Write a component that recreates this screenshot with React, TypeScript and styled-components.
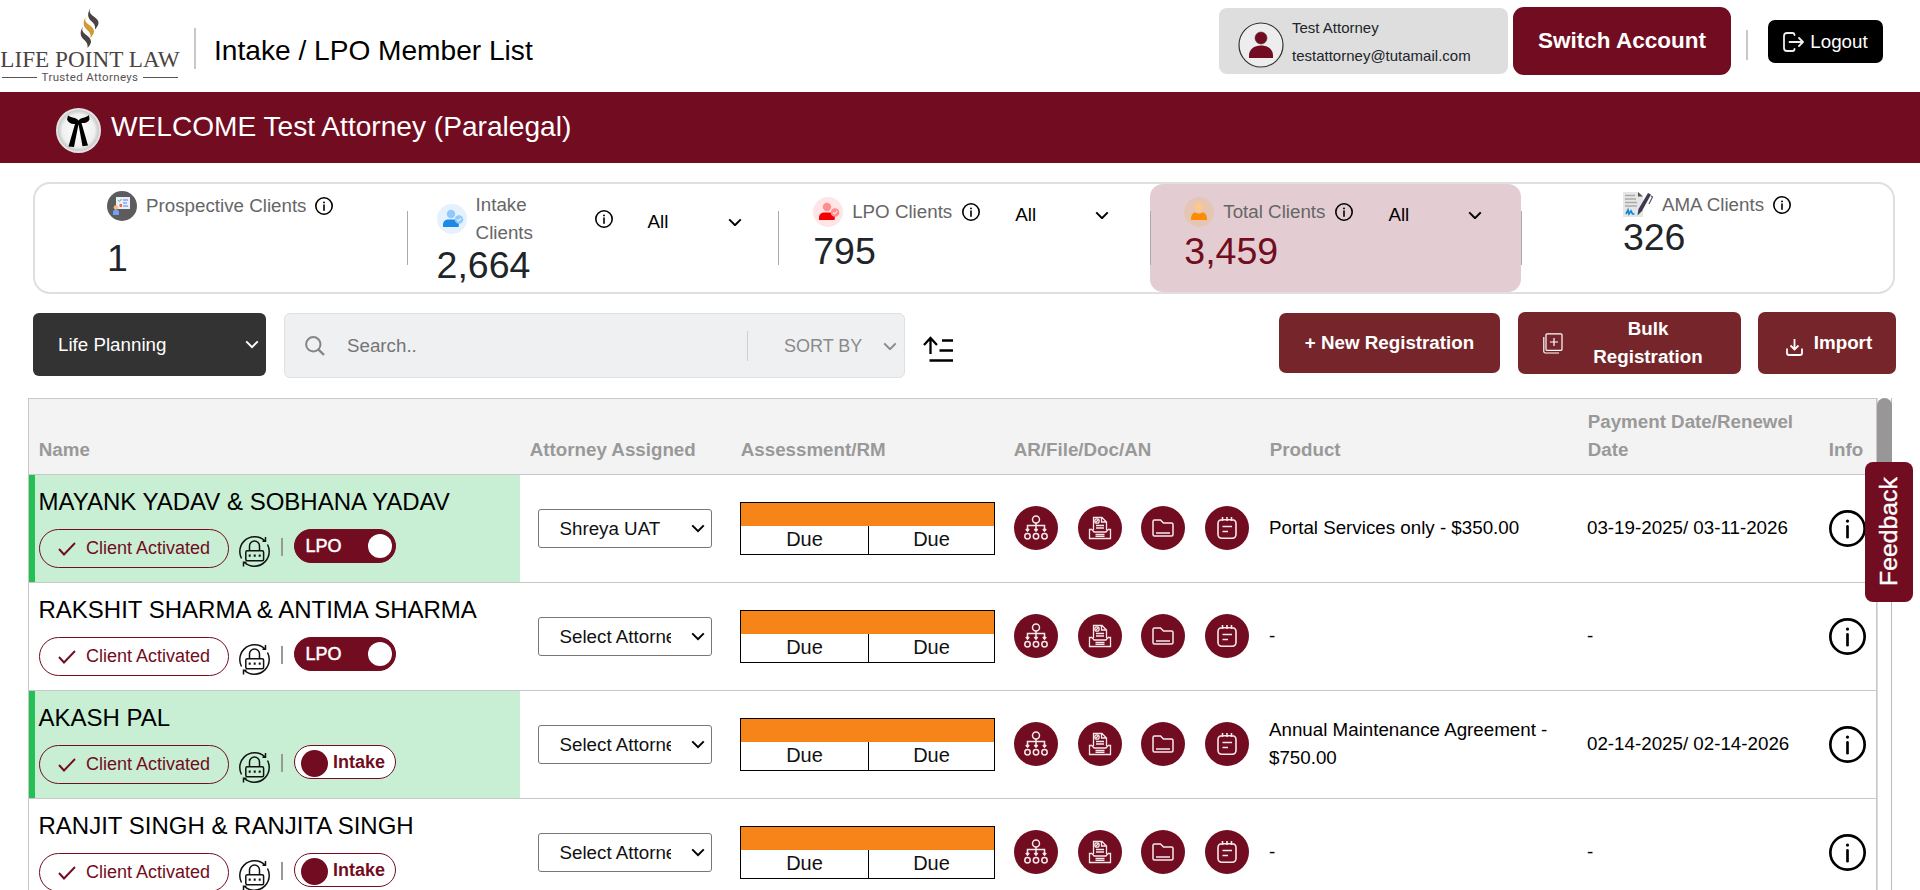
import React from "react";
import styled, { createGlobalStyle } from "styled-components";

const MAROON = "#720c20";

const Global = createGlobalStyle`
  *, *::before, *::after { box-sizing: border-box; }
  html, body { margin: 0; padding: 0; height: 890px; overflow: hidden; background: #fff; }
  body { font-family: "Liberation Sans", Arial, sans-serif; font-size: 18.75px; line-height: 28px; color: #000; }
  button { font-family: inherit; cursor: pointer; padding: 0; border: 0; }
  svg { display: block; flex: none; }
`;

const Page = styled.div`
  width: 1920px; height: 890px; overflow: hidden; position: relative;
  display: flex; flex-direction: column;
`;

/* ---------- header ---------- */
const Header = styled.header`
  height: 92px; flex: none; display: flex; align-items: flex-start;
`;
const Logo = styled.div`
  width: 180px; height: 92px; padding: 8px 0 0; margin-right: 14px;
  display: flex; flex-direction: column; align-items: center;
`;
const LogoName = styled.div`
  font: 23.2px/24px "Liberation Serif", serif; color: #4b4343; white-space: nowrap; margin-top: -1px;
`;
const LogoTag = styled.div`
  display: flex; align-items: center; gap: 5px; margin-top: -1px;
  font: 11.5px/14px Roboto, sans-serif; letter-spacing: 0.35px; color: #5a5353;
  &::before, &::after { content: ""; width: 35px; height: 1px; background: #5a5353; margin-top: 1px; }
`;
const Rule = styled.span<{ $top: number; $h: number }>`
  width: 2px; height: ${(p) => p.$h}px; margin-top: ${(p) => p.$top}px; background: #c8c8c8; flex: none;
`;
const Title = styled.h1`
  margin: 30px 0 0 18px; font-size: 28.125px; line-height: 42px; font-weight: 400; flex: 1; white-space: nowrap;
`;
const Account = styled.div`
  width: 289px; height: 66px; margin: 8px 5px 0 0; padding: 6px 0 0 19px; border-radius: 8px;
  background: #dedede; display: flex; font-size: 15px; color: #212529;
  svg { margin: 8px 8px 0 0; }
`;
const Switch = styled.button`
  width: 218px; height: 68px; margin: 7px 15px 0 0; padding-bottom: 1px; border-radius: 11px; background: ${MAROON};
  color: #fff; font-size: 22.5px; font-weight: 700;
`;
const Logout = styled.button`
  width: 115px; height: 43px; margin: 20px 37px 0 20px; border-radius: 7px; background: #000; color: #fff;
  font-size: 18.75px; display: flex; align-items: center; justify-content: center; gap: 6px;
`;

/* ---------- welcome band ---------- */
const Band = styled.div`
  height: 71px; flex: none; background: ${MAROON}; color: #fff; font-size: 28.125px; line-height: 42px;
  display: flex; align-items: flex-start; padding: 14px 0 0 56px; gap: 10px;
  svg { margin-top: 2px; }
`;

/* ---------- statistics ---------- */
const Stats = styled.section`
  margin: 19px 25px 0 33px; height: 112px; flex: none; border: 2px solid #dfdfdf; border-radius: 17px;
  display: grid; grid-template-columns: repeat(5, 1fr);
`;
const Stat = styled.div<{ $active?: boolean; $first?: boolean; $pad: string }>`
  padding: ${(p) => p.$pad}; position: relative; border-radius: 13px;
  background: ${(p) => (p.$active ? "#e4cdd2" : "transparent")};
  color: ${(p) => (p.$active ? MAROON : "#212529")};
  &::before {
    content: ""; position: absolute; left: 0; top: 27px; width: 1px; height: 54px; background: #aaa;
    display: ${(p) => (p.$first ? "none" : "block")};
  }
`;
const StatTop = styled.div`
  display: flex; align-items: center;
`;
const StatLabel = styled.span<{ $w?: number; $mr?: number }>`
  width: ${(p) => (p.$w ? p.$w + "px" : "auto")}; color: #666; margin: 0 ${(p) => p.$mr ?? 9}px 0 9px;
`;
const Filter = styled.div`
  display: flex; align-items: center; justify-content: space-between; width: 94px; color: #000;
  margin: 3px 0 -3px 35px;
`;
const StatValue = styled.div<{ $mt: number }>`
  font-size: 37.5px; line-height: 40px; margin-top: ${(p) => p.$mt}px;
`;

/* ---------- toolbar ---------- */
const Toolbar = styled.div`
  height: 66px; flex: none; margin: 18px 24px 0 33px; display: flex; align-items: flex-start;
`;
const Plan = styled.div`
  width: 233px; height: 63px; margin: 1px 18px 0 0; padding: 0 7px 0 25px; border-radius: 6px; background: #333;
  color: #fff; display: flex; align-items: center; justify-content: space-between;
`;
const Search = styled.div`
  width: 621px; height: 65px; margin-top: 1px; padding: 1px 0 0 20px; border: 1px solid #dee0e3; border-radius: 6px;
  background: #eff0f2; color: #757575; display: flex; align-items: center;
`;
const SearchHint = styled.span`
  flex: 1; padding-left: 22px;
`;
const SortBy = styled.div`
  width: 157px; padding: 0 7px 0 36px; border-left: 1px solid #cfd0d3; height: 30px; color: #8a8a8a; font-size: 18px;
  display: flex; align-items: center; justify-content: space-between;
`;
const SortIcon = styled.div`
  margin: 24px auto 0 18px;
`;
const Action = styled.button<{ $w: number; $h: number; $top?: number; $ml?: number }>`
  width: ${(p) => p.$w}px; height: ${(p) => p.$h}px; margin: ${(p) => p.$top || 0}px 0 0 ${(p) => p.$ml || 0}px;
  border-radius: 7px; background: #76262b; color: #fff; font-size: 18.75px; line-height: 28px; font-weight: 700;
  display: flex; align-items: center; justify-content: center;
`;
const BulkText = styled.span`
  width: 112px; margin: 0 12px 0 29px;
`;
const ImportText = styled.span`
  margin: 0 0 0 11px;
`;
const ImportGlyph = styled.span`
  margin: 8px 0 0 4px;
`;

/* ---------- table ---------- */
const TableArea = styled.div`
  margin: 20px 0 0 28px; display: flex; flex: 1; min-height: 0;
`;
const Table = styled.div`
  width: 1849px; border-left: 1px solid #c8c8c8; border-right: 1px solid #c8c8c8; overflow: hidden;
`;
const Columns = styled.div`
  display: grid; grid-template-columns: 491px 211px 273px 256px 318px 241px 57px;
`;
const HeadRow = styled(Columns)`
  height: 77px; border-top: 1px solid #c8c8c8; border-bottom: 1px solid #c8c8c8; background: #f3f3f3;
  align-items: end; padding-bottom: 10px; color: #999; font-weight: 700;
  > * { padding-left: 9.75px; }
`;
const Row = styled(Columns)`
  height: 108px; border-bottom: 1px solid #c8c8c8; align-items: center;
`;
const NameCell = styled.div<{ $active?: boolean }>`
  height: 107px; padding: 10px 0 0 ${(p) => (p.$active ? 4 : 10)}px;
  background: ${(p) => (p.$active ? "#c8efd4" : "#fff")};
  border-left: ${(p) => (p.$active ? "6px solid #22c055" : "0")};
`;
const ClientName = styled.div`
  font-size: 24px; line-height: 34px; height: 34px; white-space: nowrap; margin-left: -0.5px;
`;
const NameTools = styled.div`
  display: flex; align-items: flex-start; margin-top: 10px;
`;
const Activated = styled.button`
  width: 190px; height: 39px; border: 1px solid ${MAROON}; border-radius: 20px; background: transparent;
  color: ${MAROON}; font-size: 18px; display: flex; align-items: center; padding: 0 0 1px 18px; gap: 10px;
  svg { margin-top: 2px; }
`;
const LockWrap = styled.span`
  margin: 7px 11px 0 10px;
`;
const Tick = styled.span`
  width: 2px; height: 18px; margin: 9px 11px 0 0; background: #999;
`;
const Toggle = styled.div<{ $on: boolean }>`
  width: 102px; height: 34px; border-radius: 17px; border: 1px solid ${MAROON}; font-size: 18px;
  background: ${(p) => (p.$on ? MAROON : "#fff")}; color: ${(p) => (p.$on ? "#fff" : MAROON)};
  font-weight: ${(p) => (p.$on ? 400 : 700)}; -webkit-text-stroke: ${(p) => (p.$on ? "0.5px #fff" : "0")};
  display: flex; align-items: center; flex-direction: ${(p) => (p.$on ? "row" : "row-reverse")};
  justify-content: space-between; padding: ${(p) => (p.$on ? "0 3px 0 10.5px" : "0 10px 0 6px")};
  span { margin-top: -1px; }
`;
const Knob = styled.i<{ $on: boolean }>`
  width: ${(p) => (p.$on ? 24 : 27)}px; height: ${(p) => (p.$on ? 24 : 27)}px; border-radius: 50%;
  background: ${(p) => (p.$on ? "#fff" : MAROON)};
  margin-top: ${(p) => (p.$on ? 0 : 2)}px;
`;
const Picker = styled.div`
  width: 174px; height: 39px; margin-left: 18px; border: 1px solid #767676; border-radius: 3px; background: #fff;
  display: flex; align-items: center; justify-content: space-between; padding: 0 6px 0 20.5px; color: #111;
  span { width: 111px; overflow: hidden; white-space: nowrap; }
`;
const Assessment = styled.div`
  width: 255px; height: 53px; margin: -1px 0 0 9px; border: 1px solid #000; display: grid;
  grid-template: 23px 28px / 128px 1fr; font-size: 20px; line-height: 27px; text-align: center; color: #111;
`;
const AssessBar = styled.i`
  grid-column: 1 / 3; background: #f78419;
`;
const Due = styled.span<{ $split?: boolean }>`
  border-right: ${(p) => (p.$split ? "1px solid #000" : "0")};
`;
const Actions = styled.div`
  display: flex; gap: 19.5px; padding-left: 10px; margin-top: -1px;
`;
const Round = styled.button`
  width: 44px; height: 44px; border-radius: 50%; background: ${MAROON}; display: grid; place-items: center;
`;
const Text = styled.div`
  padding: 0 20px 2px 9px;
`;
const Dates = styled(Text)`
  padding-right: 0; white-space: nowrap;
`;
const InfoCell = styled.div`
  padding-left: 10px;
`;
const Scrollbar = styled.div`
  width: 15px; border-right: 1px solid #bbb; background: #fff; border-left: 1px solid #ddd;
`;
const Thumb = styled.div`
  width: 15px; margin-left: -1px; height: 140px; border-radius: 8px; background: #999697;
`;
const Feedback = styled.div`
  position: absolute; left: 1865px; top: 462px; width: 48px; height: 140px; border-radius: 8px; background: ${MAROON};
  color: #fff; font-size: 24.8px; line-height: 48px; text-align: center; writing-mode: vertical-rl;
  transform: rotate(180deg); -webkit-text-stroke: 0.35px #fff;
`;

/* ---------- icons ---------- */
const Chevron = ({ color = "#000", w = 14 }: { color?: string; w?: number }) => (
  <svg width={w} height={w * 0.64} viewBox="0 0 14 9" fill="none" stroke={color} strokeWidth="2">
    <path d="M1.2 1.4 7 7.2l5.8-5.8" />
  </svg>
);

const InfoIcon = ({ size = 18, sw = 1.6 }: { size?: number; sw?: number }) => (
  <svg width={size} height={size} viewBox="0 0 18 18" fill="none" stroke="#000" strokeWidth={sw}>
    <circle cx="9" cy="9" r={9 - sw / 2} />
    <path d="M9 8v5.2" strokeLinecap="round" />
    <circle cx="9" cy="5.4" r={sw * 0.6} fill="#000" stroke="none" />
  </svg>
);

const FLAME_STROKE = "M10.500 0c-2 4.500 0 6 4 9 5 3.800 5.500 7 .5 12.500.5-4-.8-5.800-3.500-8.200C7.500 9.800 7 5.500 10.500 0z";
const Flame = () => (
  <svg width="20" height="40" viewBox="0 0 20 40">
    <path fill="#4b4343" d={FLAME_STROKE} />
    <path fill="#d09a35" d={FLAME_STROKE} transform="translate(-4.5 8.500)" />
    <path fill="#4b4343" d={FLAME_STROKE} transform="translate(-7.5 18.500)" />
  </svg>
);

const Avatar = () => (
  <svg width="46" height="46" viewBox="0 0 46 46">
    <circle cx="23" cy="23" r="22" fill="#ededed" stroke="#333" strokeWidth="1.2" />
    <circle cx="23" cy="16" r="6" fill={MAROON} stroke="#4b2b30" strokeWidth="0.6" />
    <path d="M11 36v-2.500c0-6 5-10 12-10s12 4 12 10V36z" fill={MAROON} />
  </svg>
);

const LogoutIcon = () => (
  <svg width="21" height="20" viewBox="0 0 21 20" fill="none" stroke="#eee" strokeWidth="1.8" strokeLinecap="round" strokeLinejoin="round">
    <path d="M11.500 3Q11.500 1 9.500 1H4Q1 1 1 4v12q0 3 3 3h5.500q2 0 2-2M6.500 10H20M16 6l4 4-4 4" />
  </svg>
);

const Tie = () => (
  <svg width="45" height="45" viewBox="0 0 45 45">
    <defs>
      <radialGradient id="tie"><stop offset="0" stopColor="#fff" /><stop offset="0.75" stopColor="#f0f0f0" /><stop offset="1" stopColor="#bdbdbd" /></radialGradient>
    </defs>
    <circle cx="22.500" cy="22.500" r="21.500" fill="url(#tie)" stroke="#e3e3e3" strokeWidth="2" />
    <path d="M12 7.500c3 2 6 2 9 3.500l1.500 1.500L24 11c3-2 6-1 9-4l.5 4.500c-1.500 3-5 4-8 3.500l6.500 22.500-5.500.8-4-22-4.500 22.700-5.500-.5 6.500-22.500c-3.500.5-7-1.500-8-4.500z" fill="#000" />
  </svg>
);

const BoardIcon = () => (
  <svg width="30" height="30" viewBox="0 0 30 30">
    <circle cx="15" cy="15" r="15" fill="#5c5c5c" />
    <path d="M9 6h14v12H9z" fill="#e8eefb" />
    <path d="M16 9h5M16 12h4M16 15h5" stroke="#8aa6e8" strokeWidth="1.600" />
    <path d="m11 9 1.500 1.500L14.500 8" stroke="#5b5" fill="none" />
    <path d="M12.500 13h2.500v3h-2.500z" fill="#f66b32" />
    <circle cx="9" cy="16.500" r="2.300" fill="#f9b98a" />
    <path d="M6 24v-3q0-2 2-2h2q2 0 2 2v3z" fill="#6ea2f4" />
  </svg>
);

const PersonIcon = ({ bg, head, body, check }: { bg: string; head: string; body: string; check?: boolean }) => (
  <svg width="30" height="30" viewBox="0 0 30 30">
    <circle cx="15" cy="15" r="15" fill={bg} />
    <circle cx={check ? 14 : 15} cy="10" r="4.200" fill={head} />
    {check ? <path d="M6 23v-3q.5-4 4.500-4.500h6.500q4 .5 5 4.500l-.5 3z" fill={body} /> : <path d="M7 23v-2q1-5.500 4-5.500 4 2 8 0 3 0 4 5.500v2z" fill={body} />}
    {check && <circle cx="22" cy="15.500" r="4.300" fill={head} />}
    {check && <path d="m20 15.500 1.500 1.500 2.700-2.900" stroke={bg} strokeWidth="1.200" fill="none" />}
  </svg>
);

const ContractIcon = () => (
  <svg width="30" height="26" viewBox="0 0 30 26">
    <path d="M0 0h15l5 4v21H0z" fill="#e6e6e6" />
    <path d="M15 0l5 4.500h-5z" fill="#555" />
    <path d="M2 3.500h10M2 7h11M2 10.500h12M2 14h12" stroke="#aaa" strokeWidth="1.700" />
    <path d="m3 22 2-4 1 4 2-3 1.500 3h2" stroke="#1688d8" strokeWidth="1.700" fill="none" />
    <path d="m14.500 23.500 1-6.500L25 1l3 1.500L19 19z" fill="#3c3a4e" />
    <path d="m28 4 1.500 1-3.500 7" stroke="#55556a" strokeWidth="1.200" fill="none" />
  </svg>
);

const SearchIcon = () => (
  <svg width="20" height="20" viewBox="0 0 20 20" fill="none" stroke="#858585" strokeWidth="2">
    <circle cx="8.300" cy="8.300" r="7.200" /><path d="m13.300 13.300 5.700 5.700" strokeWidth="2.400" />
  </svg>
);

const SortGlyph = () => (
  <svg width="30" height="26" viewBox="0 0 30 26" fill="none" stroke="#000" strokeWidth="2.300">
    <path d="M7.500 18V2M1 9l6.500-7L14 9M19 4.500h11M16.500 14.500H30M6.500 24.500H30" />
  </svg>
);

const AddCopyIcon = () => (
  <svg width="20" height="21" viewBox="0 0 20 21" fill="none" stroke="#fff" strokeWidth="1.200">
    <path d="M4 .8h14q1 0 1 1v14.500q0 1-1 1H4q-1 0-1-1V1.800q0-1 1-1zM11 5v8M7 9h8M.8 4v14.500q0 1.500 1.500 1.500H16" />
  </svg>
);

const ImportIcon = () => (
  <svg width="17" height="17" viewBox="0 0 17 17" fill="none" stroke="#fff" strokeWidth="1.800">
    <path d="M8.500 0v10M4.500 6.500l4 4 4-4M1 9.500V14q0 2 2 2h11q2 0 2-2V9.500" />
  </svg>
);

const CheckIcon = () => (
  <svg width="18" height="14" viewBox="0 0 18 14" fill="none" stroke={MAROON} strokeWidth="1.900">
    <path d="m1 7 5 5.500L17 1" />
  </svg>
);

const LockIcon = () => (
  <svg width="31" height="31" viewBox="0 0 31 31" fill="none" stroke="#111" strokeWidth="1.500">
    <path d="M2.500 22.500A14.700 14.700 0 0 1 .8 15.500A14.700 14.700 0 0 1 15.500.8A14.700 14.700 0 0 1 26 5M26.500 1v4.300H23.500" />
    <path d="M28.500 8.500A14.700 14.700 0 0 1 30.200 15.500A14.700 14.700 0 0 1 15.500 30.200A14.700 14.700 0 0 1 5 26M4.500 30.500v-4.300H7.500" />
    <rect x="6.800" y="14.800" width="17.800" height="10" rx="1.500" />
    <path d="M10.500 14.500v-4.500a5 5 0 0 1 10 0v4.500" />
    <path d="M9.700 19.600h2M14.700 19.600h2M19.700 19.600h2" strokeWidth="2.200" />
  </svg>
);

const TreeIcon = () => (
  <svg width="24" height="26" viewBox="0 0 24 26" fill="none" stroke="#f5e9eb" strokeWidth="1.500">
    <circle cx="12" cy="4.500" r="3.500" />
    <path d="M12 8v8M3.500 16v-5.500h17V16M1.800 14l1.700 2 1.700-2M10.300 14l1.700 2 1.700-2M18.800 14l1.700 2 1.700-2" />
    <circle cx="3.500" cy="21.300" r="2.700" /><circle cx="12" cy="21.300" r="2.700" /><circle cx="20.500" cy="21.300" r="2.700" />
  </svg>
);

const FileIcon = () => (
  <svg width="24" height="24" viewBox="0 0 24 24" fill="none" stroke="#f5e9eb" strokeWidth="1.300">
    <path d="M5.500 14V1.500H14l4.500 4.500v8M13.500 1.500V6h5" />
    <circle cx="9" cy="5" r="2.200" /><path d="m7.500 6.500 3-3M8 9.500h8M8 12h8" />
    <path d="M4 13.500H1.500v9h21v-9H20M4 13.500l2 2.500h12l2-2.500M7.500 18.500h9M7.500 20.300h9" />
  </svg>
);

const FolderIcon = () => (
  <svg width="22" height="18" viewBox="0 0 22 18" fill="none" stroke="#f5e9eb" strokeWidth="1.500">
    <path d="M2.500 1h6l3 3h8q1.500 0 1.500 1.500v10q0 1.500-1.500 1.500h-17Q1 17 1 15.500v-13Q1 1 2.500 1zM4 14h14" />
  </svg>
);

const NoteIcon = () => (
  <svg width="20" height="22" viewBox="0 0 20 22" fill="none" stroke="#f5e9eb" strokeWidth="1.600">
    <path d="M5 2.800h10q4 0 4 4v10.400q0 4-4 4H5q-4 0-4-4V6.800q0-4 4-4zM5.500 0v4M10 0v4M14.500 0v4M5.500 9.500h9.500M5.500 14.500h5.500" />
  </svg>
);

/* ---------- data ---------- */
type Client = { name: string; active?: boolean; lpo: boolean; attorney: string; product: string; dates: string };

const clients: Client[] = [
  { name: "MAYANK YADAV & SOBHANA YADAV", active: true, lpo: true, attorney: "Shreya UAT", product: "Portal Services only - $350.00", dates: "03-19-2025/ 03-11-2026" },
  { name: "RAKSHIT SHARMA & ANTIMA SHARMA", lpo: true, attorney: "Select Attorney", product: "-", dates: "-" },
  { name: "AKASH PAL", active: true, lpo: false, attorney: "Select Attorney", product: "Annual Maintenance Agreement - $750.00", dates: "02-14-2025/ 02-14-2026" },
  { name: "RANJIT SINGH & RANJITA SINGH", lpo: false, attorney: "Select Attorney", product: "-", dates: "-" },
];

const headings = ["Name", "Attorney Assigned", "Assessment/RM", "AR/File/Doc/AN", "Product", "Payment Date/Renewel Date", "Info"];

const AllFilter = () => (
  <Filter>All<Chevron /></Filter>
);

const ClientRow = ({ c }: { c: Client }) => (
  <Row>
    <NameCell $active={c.active}>
      <ClientName>{c.name}</ClientName>
      <NameTools>
        <Activated><CheckIcon />Client Activated</Activated>
        <LockWrap><LockIcon /></LockWrap>
        <Tick />
        <Toggle $on={c.lpo}><span>{c.lpo ? "LPO" : "Intake"}</span><Knob $on={c.lpo} /></Toggle>
      </NameTools>
    </NameCell>
    <Picker><span>{c.attorney}</span><Chevron /></Picker>
    <Assessment><AssessBar /><Due $split>Due</Due><Due>Due</Due></Assessment>
    <Actions>
      <Round><TreeIcon /></Round>
      <Round><FileIcon /></Round>
      <Round><FolderIcon /></Round>
      <Round><NoteIcon /></Round>
    </Actions>
    <Text>{c.product}</Text>
    <Dates>{c.dates}</Dates>
    <InfoCell><InfoIcon size={37} sw={1.3} /></InfoCell>
  </Row>
);

export default function App() {
  return (
    <Page>
      <Global />
      <Header>
        <Logo>
          <Flame />
          <LogoName>LIFE POINT LAW</LogoName>
          <LogoTag>Trusted Attorneys</LogoTag>
        </Logo>
        <Rule $top={28} $h={41} />
        <Title>Intake / LPO Member List</Title>
        <Account><Avatar /><div>Test Attorney<br />testattorney@tutamail.com</div></Account>
        <Switch>Switch Account</Switch>
        <Rule $top={30} $h={30} />
        <Logout><LogoutIcon />Logout</Logout>
      </Header>
      <Band><Tie />WELCOME Test Attorney (Paralegal)</Band>

      <Stats>
        <Stat $first $pad="7px 0 0 72px">
          <StatTop><BoardIcon /><StatLabel>Prospective Clients</StatLabel><InfoIcon /></StatTop>
          <StatValue $mt={17}>1</StatValue>
        </Stat>
        <Stat $pad="7px 0 0 30px">
          <StatTop>
            <PersonIcon bg="#e5f1fd" head="#90c9fa" body="#1e88e5" check />
            <StatLabel $w={110}>Intake<br />Clients</StatLabel><InfoIcon /><AllFilter />
          </StatTop>
          <StatValue $mt={-2}>2,664</StatValue>
        </Stat>
        <Stat $pad="13px 0 0 35px">
          <StatTop>
            <PersonIcon bg="#ffe5e5" head="#ff8d8d" body="#f40000" check />
            <StatLabel $mr={10}>LPO Clients</StatLabel><InfoIcon /><AllFilter />
          </StatTop>
          <StatValue $mt={4}>795</StatValue>
        </Stat>
        <Stat $active $pad="13px 0 0 34.500px">
          <StatTop>
            <PersonIcon bg="#e5c5b4" head="#ffc88a" body="#ff8b00" />
            <StatLabel $mr={10}>Total Clients</StatLabel><InfoIcon /><AllFilter />
          </StatTop>
          <StatValue $mt={4}>3,459</StatValue>
        </Stat>
        <Stat $pad="7px 0 0 101.500px">
          <StatTop><ContractIcon /><StatLabel>AMA Clients</StatLabel><InfoIcon /></StatTop>
          <StatValue $mt={-2}>326</StatValue>
        </Stat>
      </Stats>

      <Toolbar>
        <Plan>Life Planning<Chevron color="#fff" /></Plan>
        <Search>
          <SearchIcon /><SearchHint>Search..</SearchHint>
          <SortBy>SORT BY<Chevron color="#8a8a8a" /></SortBy>
        </Search>
        <SortIcon><SortGlyph /></SortIcon>
        <Action $w={221} $h={60} $top={1}>+ New Registration</Action>
        <Action $w={223} $h={62} $ml={18}><AddCopyIcon /><BulkText>Bulk Registration</BulkText></Action>
        <Action $w={138} $h={62} $ml={17}><ImportGlyph><ImportIcon /></ImportGlyph><ImportText>Import</ImportText></Action>
      </Toolbar>

      <TableArea>
        <Table>
          <HeadRow>{headings.map((h) => <div key={h}>{h}</div>)}</HeadRow>
          {clients.map((c) => <ClientRow key={c.name} c={c} />)}
        </Table>
        <Scrollbar><Thumb /></Scrollbar>
      </TableArea>
      <Feedback>Feedback</Feedback>
    </Page>
  );
}
